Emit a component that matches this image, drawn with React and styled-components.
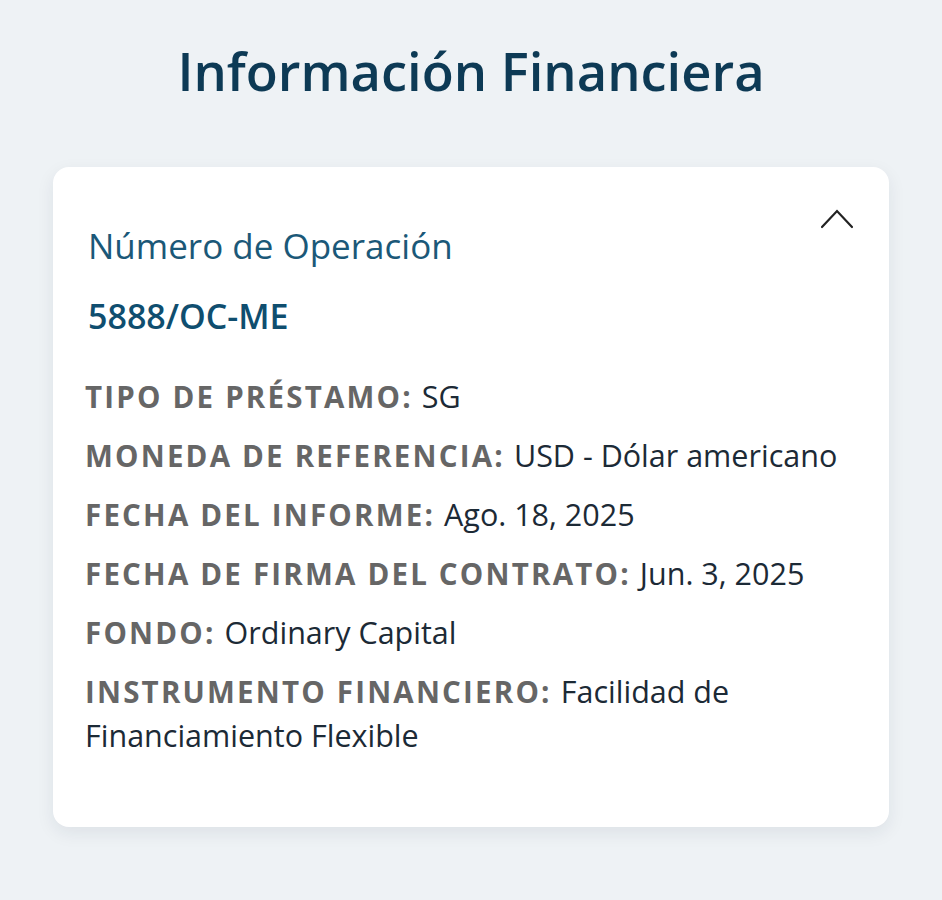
import React from "react";
import styled, { createGlobalStyle } from "styled-components";

const Global = createGlobalStyle`
  html, body { margin: 0; padding: 0; background: #eef2f5; }
  body { font-family: "Open Sans", "Noto Sans", sans-serif; }
`;

const Page = styled.main`
  min-height: 900px;
  box-sizing: border-box;
  padding: 35px 53px 40px;
  background: #eef2f5;
`;

const Title = styled.h1`
  margin: 0 0 60px;
  text-align: center;
  font-size: 52.5px;
  line-height: 72px;
  font-weight: 600;
  color: #0d3a55;
`;

const Card = styled.section`
  position: relative;
  background: #fff;
  border-radius: 16px;
  box-shadow: 0 6px 18px rgba(20, 40, 60, 0.08);
  padding: 57px 32px 69px;
`;

const Toggle = styled.button`
  position: absolute;
  top: 37px;
  right: 32px;
  width: 40px;
  height: 30px;
  border: 0;
  background: none;
  padding: 0;
  display: flex;
  align-items: center;
  justify-content: center;
  cursor: pointer;
`;

const OpLabel = styled.div`
  padding-left: 3px;
  font-size: 35px;
  line-height: 44px;
  color: #1b5878;
`;

const OpNumber = styled.div`
  margin-top: 26px;
  padding-left: 3px;
  font-size: 34px;
  line-height: 44px;
  font-weight: 600;
  color: #0f4e6f;
`;

const Rows = styled.dl`
  margin: 37px 0 0;
  display: flex;
  flex-direction: column;
  gap: 15px;
`;

const Row = styled.div`
  font-size: 29.5px;
  line-height: 44px;
  color: #1c2a36;
`;

const Label = styled.dt`
  display: inline;
  font-weight: 700;
  letter-spacing: 2.2px;
  color: #666666;
  text-transform: uppercase;
  margin-right: 9px;
`;

const Value = styled.dd`
  display: inline;
  margin: 0;
  font-size: 30.5px;
  line-height: 30px;
`;

const rows = [
  ["Tipo de Préstamo:", "SG"],
  ["Moneda de Referencia:", "USD - Dólar americano"],
  ["Fecha del Informe:", "Ago. 18, 2025"],
  ["Fecha de Firma del Contrato:", "Jun. 3, 2025"],
  ["Fondo:", "Ordinary Capital"],
  ["Instrumento Financiero:", "Facilidad de Financiamiento Flexible"],
];

export default function App() {
  return (
    <>
      <Global />
      <Page>
        <Title>Información Financiera</Title>
        <Card>
          <Toggle aria-label="Contraer">
            <svg width="34" height="20" viewBox="0 0 34 20" fill="none">
              <path d="M2 18 L17 2 L32 18" stroke="#222" strokeWidth="2.2" strokeLinecap="round" strokeLinejoin="miter" />
            </svg>
          </Toggle>
          <OpLabel>Número de Operación</OpLabel>
          <OpNumber>5888/OC-ME</OpNumber>
          <Rows>
            {rows.map(([l, v]) => (
              <Row key={l}>
                <Label>{l}</Label>
                <Value>{v}</Value>
              </Row>
            ))}
          </Rows>
        </Card>
      </Page>
    </>
  );
}
